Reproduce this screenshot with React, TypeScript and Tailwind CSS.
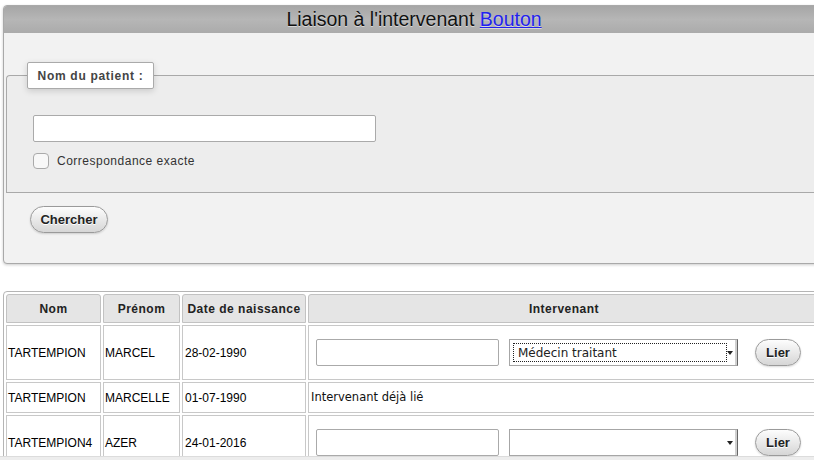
import React from "react";

type Row = {
  nom: string;
  prenom: string;
  naissance: string;
  lie?: boolean;
  role?: string;
  tall?: boolean;
};

const rows: Row[] = [
  { nom: "TARTEMPION", prenom: "MARCEL", naissance: "28-02-1990", role: "Médecin traitant", tall: true },
  { nom: "TARTEMPION", prenom: "MARCELLE", naissance: "01-07-1990", lie: true },
  { nom: "TARTEMPION4", prenom: "AZER", naissance: "24-01-2016", role: "", tall: true },
];

const PillButton = ({ label, className = "" }: { label: string; className?: string }) => (
  <button
    type="button"
    className={`h-[27px] rounded-full border border-[#9a9a9a] bg-gradient-to-b from-[#fdfdfd] to-[#d6d6d6] font-bold text-[13px] text-[#222] shadow-[0_1px_2px_rgba(0,0,0,0.15)] [text-shadow:0_1px_0_#fff] ${className}`}
  >
    {label}
  </button>
);

const FakeSelect = ({ value }: { value: string }) => (
  <div className="relative flex h-[27px] w-[229px] items-center border border-[#a6a6a6] border-r-[#666] bg-white shadow-[inset_-2px_0_0_#d0d0d0]">
    {value ? (
      <div className="ml-[3px] flex h-[19px] w-[214px] items-center border border-dotted border-[#222] pl-[4px] font-['DejaVu_Sans'] text-[12px] text-[#222]">
        {value}
      </div>
    ) : null}
    <span className="absolute right-[4px] top-[11px] h-0 w-0 border-x-[3px] border-t-[4px] border-x-transparent border-t-[#222]" />
  </div>
);

export default function App() {
  return (
    <div className="relative h-[460px] w-[814px] overflow-hidden bg-white font-['Liberation_Sans',Arial,sans-serif] text-black">
      {/* Search panel */}
      <div className="ml-[3px] mt-[5px] w-[822px] overflow-hidden rounded-[4px] border border-[#a9a9a9] bg-[#f2f2f2] shadow-[0_1px_3px_rgba(0,0,0,0.2)]">
        <div className="flex h-[27px] items-center justify-center bg-gradient-to-b from-[#a6a6a6] via-[#b6b6b6] to-[#ababab] text-[19.5px] text-[#111] [text-shadow:0_1px_0_rgba(255,255,255,0.5)]">
          <span>
            Liaison à l'intervenant{" "}
            <a href="#" className="text-[#2222ee] underline">
              Bouton
            </a>
          </span>
        </div>

        <div className="pb-[30px] pl-[2px] pt-[42px]">
          <div className="relative h-[118px] rounded-tl-[4px] border border-r-0 border-[#a9a9a9] bg-[#ededed] pl-[26px] pt-[39px]">
            <div className="absolute left-[20px] top-[-14px] flex h-[27px] w-[127px] items-center justify-center rounded-[2px] border border-[#aaa] bg-white text-[12px] font-bold tracking-[0.7px] text-[#444] shadow-[0_2px_6px_rgba(0,0,0,0.15)]">
              Nom du patient :
            </div>
            <input
              type="text"
              className="block h-[27px] w-[343px] rounded-[2px] border border-[#aaa] bg-white"
            />
            <label className="mt-[10px] flex items-center">
              <span className="h-[16px] w-[16px] rounded-[4px] border border-[#aaa] bg-[#f8f8f8]" />
              <span className="ml-[8px] text-[12px] tracking-[0.5px] text-[#333]">Correspondance exacte</span>
            </label>
          </div>
          <div className="ml-[24px] mt-[13px]">
            <PillButton label="Chercher" className="w-[78px]" />
          </div>
        </div>
      </div>

      {/* Results table */}
      <table className="ml-[3px] mt-[27px] w-[820px] border-separate border-spacing-[2px] rounded-tl-[4px] border border-[#b5b5b5] text-[12px]">
        <thead>
          <tr className="h-[29px]">
            {["Nom", "Prénom", "Date de naissance", "Intervenant"].map((h, i) => (
              <th
                key={h}
                className={`rounded-t-[3px] border border-[#c2c2c2] bg-[#e5e5e5] font-bold tracking-[0.5px] text-[#222] ${
                  i === 0 ? "w-[95px]" : i === 1 ? "w-[77px]" : i === 2 ? "w-[124px]" : ""
                }`}
              >
                {h}
              </th>
            ))}
          </tr>
        </thead>
        <tbody>
          {rows.map((r, i) => (
            <tr key={i} className={r.tall ? "h-[55px]" : "h-[31px]"}>
              <td className="border border-[#c8c8c8] px-[1px]">{r.nom}</td>
              <td className="border border-[#c8c8c8] px-[1px]">{r.prenom}</td>
              <td className="border border-[#c8c8c8] px-[2px]">{r.naissance}</td>
              <td className="border border-[#c8c8c8] px-[2px]">
                {r.lie ? (
                  <span className="font-['DejaVu_Sans'] text-[11.5px] text-[#111]">Intervenant déjà lié</span>
                ) : (
                  <div className="flex items-center pl-[5px]">
                    <input
                      type="text"
                      className="h-[27px] w-[183px] rounded-[2px] border border-[#aaa] bg-white"
                    />
                    <div className="ml-[10px]">
                      <FakeSelect value={r.role ?? ""} />
                    </div>
                    <PillButton label="Lier" className="ml-[17px] w-[46px]" />
                  </div>
                )}
              </td>
            </tr>
          ))}
        </tbody>
      </table>

      {/* horizontal scrollbar strip */}
      <div className="absolute bottom-0 left-0 h-[4px] w-full border-t border-[#dcdcdc] bg-[#ededed]" />
    </div>
  );
}
